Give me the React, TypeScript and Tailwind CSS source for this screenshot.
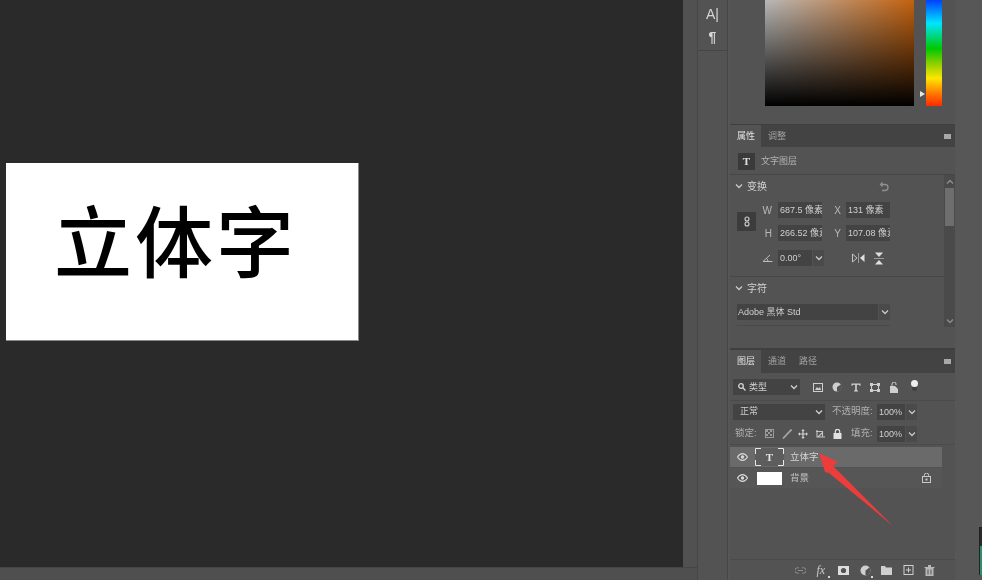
const cjk = "font-['Liberation_Sans','Noto_Sans_CJK_SC',sans-serif]";

const Chevron = ({ className = "" }: { className?: string }) => (
  <svg width="8" height="6" viewBox="0 0 8 6" className={className} fill="none" stroke="currentColor" strokeWidth="1.3">
    <path d="M1 1.5l3 3 3-3" />
  </svg>
);

const MenuIcon = () => (
  <div className="w-[7px] h-[5px] bg-[#a8a8a8]" />
);

const Eye = () => (
  <svg width="11" height="8" viewBox="0 0 11 8">
    <path d="M0.5 4C2 1.5 3.6 0.6 5.5 0.6S9 1.5 10.5 4C9 6.5 7.4 7.4 5.5 7.4S2 6.5 0.5 4z" fill="none" stroke="#d8d8d8" strokeWidth="1.1" />
    <circle cx="5.5" cy="4" r="1.7" fill="#d8d8d8" />
  </svg>
);

const Input = ({ w, children }: { w: string; children: React.ReactNode }) => (
  <div className={`${w} h-[16px] bg-[#434343] text-[9px] leading-[17px] pl-[2px] text-[#d0d0d0] overflow-hidden whitespace-nowrap`}>
    {children}
  </div>
);

const Drop = () => (
  <div className="w-[11px] h-[16px] bg-[#4a4a4a] flex items-center justify-center text-[#c8c8c8]">
    <Chevron />
  </div>
);

const Tab = ({ label, active }: { label: string; active?: boolean }) => (
  <div className={`h-full px-[7px] pt-[1px] w-[31px] flex items-center text-[9px] whitespace-nowrap ${active ? "bg-[#535353] text-[#e0e0e0]" : "text-[#a2a2a2]"}`}>
    {label}
  </div>
);

const FilterIcons = () => (
  <div className="flex items-center text-[#d0d0d0]">
    <svg width="10" height="9" viewBox="0 0 10 9" className="ml-[12px]"><rect x="0.5" y="0.5" width="9" height="8" fill="none" stroke="#cfcfcf" /><path d="M2 7l2-3 1.5 1.5L7 4l1 3z" fill="#cfcfcf" /></svg>
    <svg width="10" height="10" viewBox="0 0 10 10" className="ml-[9px]"><circle cx="5" cy="5" r="4.5" fill="#cfcfcf" /><path d="M5 5L9 2.5A4.5 4.5 0 0 1 5 9.5z" fill="#535353" /></svg>
    <svg width="10" height="9" viewBox="0 0 10 9" className="ml-[9px]"><path d="M0.5 0.5h9v2.2h-.9l-.4-1H5.8v5.6l1.2.3v.9H3v-.9l1.2-.3V1.7H1.8l-.4 1H.5z" fill="#d4d4d4" /></svg>
    <svg width="10" height="9" viewBox="0 0 10 9" className="ml-[9px]"><rect x="1.5" y="1.5" width="7" height="6" fill="none" stroke="#cfcfcf" /><path d="M0 0h3v3H0zM7 0h3v3H7zM0 6h3v3H0zM7 6h3v3H7z" fill="#cfcfcf" /></svg>
    <svg width="10" height="11" viewBox="0 0 10 11" className="ml-[9px]"><path d="M1 4h5l3 3v4H1z" fill="#cfcfcf" /><path d="M3 4V2a2 2 0 0 1 4 0v1" fill="none" stroke="#cfcfcf" /></svg>
    <div className="ml-[12px] flex flex-col items-center -mt-[4px]">
      <div className="w-[7px] h-[7px] rounded-full bg-[#ededed]" />
      <div className="w-[5px] h-[4px] rounded-b-full bg-[#3f3f3f]" />
    </div>
  </div>
);

const LockIcons = () => (
  <div className="flex items-center">
    <svg width="9" height="9" viewBox="0 0 9 9" className="ml-[8px]"><rect x="0.5" y="0.5" width="8" height="8" fill="none" stroke="#9a9a9a" /><path d="M1 1h2v2H1zM5 1h2v2H5zM3 3h2v2H3zM1 5h2v2H1zM5 5h2v2H5z" fill="#9a9a9a" /></svg>
    <svg width="10" height="10" viewBox="0 0 10 10" className="ml-[8px]"><path d="M1 9.500L9.500 .5" stroke="#a4a4a4" strokeWidth="1.800" fill="none" /></svg>
    <svg width="10" height="10" viewBox="0 0 10 10" className="ml-[6px]"><path d="M5 0l1.700 2H5.600v2.400H8V3.300l2 1.700-2 1.700V5.600H5.600V8h1.100L5 10 3.300 8h1.100V5.600H2v1.100L0 5l2-1.700v1.100h2.400V2H3.300z" fill="#d2d2d2" /></svg>
    <svg width="11" height="10" viewBox="0 0 11 10" className="ml-[7px]"><path d="M2 1v7h8M1 2.500h6.500V8M3 8l5-5" fill="none" stroke="#c4c4c4" strokeWidth="1.100" /></svg>
    <svg width="9" height="10" viewBox="0 0 9 10" className="ml-[7px]"><rect x="0.5" y="4" width="8" height="6" fill="#e2e2e2" /><path d="M2.300 4V2.500a2.200 2.200 0 0 1 4.400 0V4" fill="none" stroke="#e2e2e2" strokeWidth="1.200" /></svg>
  </div>
);

const FooterIcons = () => (
  <div className="h-[20px] flex items-center pl-[65px] gap-[10.5px]">
    <svg width="11" height="7" viewBox="0 0 11 7"><path d="M4 .8H2.500a2.700 2.700 0 0 0 0 5.400H4M7 .8h1.500a2.700 2.700 0 0 1 0 5.400H7M3 3.500h5" fill="none" stroke="#8e8e8e" /></svg>
    <span className="relative font-['Liberation_Serif',serif] italic text-[12px] leading-[12px] text-[#c8c8c8] w-[11px]">
      fx
      <div className="absolute right-[-2px] bottom-[-2px] w-[2px] h-[2px] bg-[#d8d8d8]" />
    </span>
    <svg width="11" height="9" viewBox="0 0 11 9"><rect width="11" height="9" fill="#dedede" /><circle cx="5.500" cy="4.500" r="2.600" fill="#535353" /></svg>
    <div className="relative">
      <svg width="11" height="11" viewBox="0 0 11 11" className="block"><circle cx="5.500" cy="5.500" r="5" fill="#cfcfcf" /><path d="M5.500 5.500L9.500 2.500A5 5 0 0 1 5.500 10.500z" fill="#535353" /></svg>
      <div className="absolute right-[-2px] bottom-[-2px] w-[2px] h-[2px] bg-[#d8d8d8]" />
    </div>
    <svg width="11" height="9" viewBox="0 0 11 9"><path d="M0 0h4l1 1.500h6V9H0z" fill="#cfcfcf" /></svg>
    <svg width="11" height="10" viewBox="-0.5 0 11 10"><rect x="0.500" y="0.500" width="9" height="9" fill="none" stroke="#cfcfcf" /><path d="M5 2.500v5M2.500 5h5" stroke="#cfcfcf" /></svg>
    <svg width="11" height="11" viewBox="-0.5 0 11 11"><path d="M0 2h10v1H9v8H1V3H0zM3.500 0h3v2h-3z" fill="#b8b8b8" /><path d="M3.500 4.500v5M6.500 4.500v5" stroke="#535353" /></svg>
  </div>
);

export default function App() {
  return (
    <div className={`relative w-[982px] h-[580px] overflow-hidden flex bg-[#565656] ${cjk}`}>
      {/* document area */}
      <div className="w-[697px] h-full flex flex-col">
        <div className="flex h-[567px]">
          <div className="w-[683px] h-full bg-[#2a2a2a] pl-[6px] pt-[163px]">
            <div className="w-[353px] h-[178px] bg-white flex items-center pl-[48px] pb-[27px] border-b border-r border-[#8a8a8a]">
              <span className="text-[78px] leading-none tracking-[3px] font-medium text-black whitespace-nowrap font-['Noto_Sans_CJK_SC',sans-serif] blur-[0.5px]">立体字</span>
            </div>
          </div>
          <div className="w-[14px] h-full bg-[#515151]" />
        </div>
        <div className="h-[13px] bg-[#4f4f4f] border-t border-[#454545]" />
      </div>

      {/* tool strip */}
      <div className="w-[31px] h-full bg-[#535353] border-x border-[#464646] shrink-0">
        <div className="h-[51px] border-b border-[#454545] flex flex-col items-center pt-[5px] text-[#d6d6d6] blur-[0.5px]">
          <span className="text-[14px] leading-[18px]">A|</span>
          <span className="text-[14px] leading-[18px] font-bold mt-[5px]">¶</span>
        </div>
      </div>

      {/* panels */}
      <div className="w-[225px] ml-[2px] h-full shrink-0 flex flex-col bg-[#3f3f3f] blur-[0.5px]">
        {/* colour picker */}
        <div className="h-[124px] bg-[#535353] flex pl-[35px] shrink-0">
          <div className="w-[149px] h-[106px] bg-[linear-gradient(to_bottom,transparent,#000),linear-gradient(to_right,#b8b8b8,#c4620f)]" />
          <div className="relative w-[16px] h-[106px] ml-[12px] bg-[linear-gradient(to_bottom,#0040ff_0%,#00e5ff_22%,#00c800_46%,#8cd000_60%,#ffe600_74%,#ff7a00_88%,#ff2a00_100%)]">
            <div className="absolute -left-[6px] top-[91px] w-0 h-0 border-y-[3px] border-y-transparent border-l-[5px] border-l-[#e8e8e8]" />
          </div>
        </div>

        {/* properties */}
        <div className="h-[22px] mt-[1px] flex items-center bg-[#434343] shrink-0">
          <Tab label="属性" active />
          <Tab label="调整" />
          <div className="ml-auto mr-[4px]"><MenuIcon /></div>
        </div>
        <div className="h-[201px] bg-[#535353] shrink-0 flex flex-col">
          <div className="h-[28px] flex items-center pl-[8px] pt-[1px] gap-[6px] border-b border-[#474747]">
            <div className="w-[17px] h-[17px] bg-[#3a3a3a] text-[#e0e0e0] text-[11px] font-bold flex items-center justify-center font-['Liberation_Serif',serif]">T</div>
            <span className="text-[9px] pt-[1px] text-[#b4b4b4]">文字图层</span>
          </div>
          <div className="flex flex-1">
            <div className="w-[214px] flex flex-col text-[#c8c8c8]">
              <div className="h-[22px] flex items-center pl-[5px] pr-[55px]">
                <Chevron />
                <span className="ml-[4px] text-[10px] text-[#d2d2d2]">变换</span>
                <svg width="11" height="11" viewBox="0 0 11 11" className="ml-auto" fill="none" stroke="#8f8f8f" strokeWidth="1.300">
                  <path d="M3 3.500h4a3 3 0 0 1 0 6H4M4.500 1.500l-2 2 2 2" />
                </svg>
              </div>
              <div className="flex pl-[7px]">
                <div className="w-[19px] h-[19px] mt-[15px] bg-[#3c3c3c] flex items-center justify-center">
                  <svg width="6" height="11" viewBox="0 0 6 11" fill="none" stroke="#cfcfcf" strokeWidth="1.100">
                    <circle cx="3" cy="3" r="2" /><circle cx="3" cy="8" r="2" />
                  </svg>
                </div>
                <div className="flex flex-col gap-[7px] pt-[5px]">
                  <div className="flex items-center h-[16px]">
                    <span className="w-[22px] text-right pr-[6px] text-[10px] text-[#b8b8b8]">W</span>
                    <Input w="w-[44px]">687.5 像素</Input>
                    <span className="w-[24px] text-right pr-[5px] text-[10px] text-[#b8b8b8]">X</span>
                    <Input w="w-[44px]">131 像素</Input>
                  </div>
                  <div className="flex items-center h-[16px]">
                    <span className="w-[22px] text-right pr-[6px] text-[10px] text-[#b8b8b8]">H</span>
                    <Input w="w-[44px]">266.52 像素</Input>
                    <span className="w-[24px] text-right pr-[5px] text-[10px] text-[#b8b8b8]">Y</span>
                    <Input w="w-[44px]">107.08 像素</Input>
                  </div>
                </div>
              </div>
              <div className="flex items-center h-[16px] mt-[9px] pl-[32px]">
                <svg width="11" height="8" viewBox="0 0 11 8" fill="none" stroke="#bdbdbd"><path d="M10.500 7.500H1L8 1M6 7.500a4 4 0 0 0-1.500-3" /></svg>
                <div className="ml-[5px]"><Input w="w-[34px]">0.00°</Input></div>
                <div className="ml-[1px]"><Drop /></div>
                <svg width="13" height="10" viewBox="0 0 13 10" className="ml-[28px]"><path d="M0.500 1l4.500 4-4.500 4z" fill="none" stroke="#c4c4c4" /><path d="M6.500 0v10" stroke="#9a9a9a" /><path d="M12.500 1L8 5l4.500 4z" fill="#e0e0e0" /></svg>
                <svg width="10" height="13" viewBox="0 0 10 13" className="ml-[9px]"><path d="M1 .5l4 4.500 4-4.500z" fill="#e0e0e0" /><path d="M0 6.500h10" stroke="#9a9a9a" /><path d="M1 12.500L5 8l4 4.500z" fill="#e0e0e0" /></svg>
              </div>
              <div className="border-b border-[#474747] mt-[10px]" />
              <div className="h-[22px] flex items-center pl-[5px]">
                <Chevron />
                <span className="ml-[4px] text-[10px] text-[#d2d2d2]">字符</span>
              </div>
              <div className="flex mt-[5px] pl-[7px]">
                <div className="w-[141px] h-[16px] bg-[#434343] text-[9px] leading-[17px] pl-[1px] text-[#d0d0d0]">Adobe 黑体 Std</div>
                <div className="ml-[1px]"><Drop /></div>
              </div>
              <div className="mt-[5px] ml-[7px] w-[153px] border-b border-[#4a4a4a]" />
            </div>
            <div className="w-[11px] h-[152px] bg-[#4a4a4a] flex flex-col items-center text-[#8e8e8e]">
              <Chevron className="rotate-180 mt-[4px]" />
              <div className="w-[9px] h-[38px] mt-[3px] bg-[#6e6e6e]" />
              <Chevron className="mt-auto mb-[3px]" />
            </div>
          </div>
        </div>

        {/* layers */}
        <div className="h-[23px] mt-[2px] flex items-center bg-[#434343] shrink-0">
          <Tab label="图层" active />
          <Tab label="通道" />
          <Tab label="路径" />
          <div className="ml-auto mr-[4px]"><MenuIcon /></div>
        </div>
        <div className="flex-1 bg-[#535353] flex flex-col">
          <div className="h-[28px] flex items-center pl-[3px] pt-[1px] border-b border-[#4b4b4b]">
            <div className="w-[67px] h-[16px] bg-[#434343] flex items-center pl-[5px] text-[#d0d0d0]">
              <svg width="8" height="8" viewBox="0 0 8 8" fill="none" stroke="#d4d4d4" strokeWidth="1.300"><circle cx="3" cy="3" r="2.300" /><path d="M4.800 4.800L7.500 7.500" /></svg>
              <span className="text-[9px] pt-[1px] ml-[3px]">类型</span>
              <Chevron className="ml-auto mr-[2px]" />
            </div>
            <div className="ml-[1px]"><FilterIcons /></div>
          </div>
          <div className="h-[21px] flex items-center pl-[3px] text-[#b0b0b0]">
            <div className="w-[92px] h-[16px] bg-[#434343] flex items-center pl-[7px] text-[#d0d0d0]">
              <span className="text-[9px]">正常</span>
              <Chevron className="ml-auto mr-[2px]" />
            </div>
            <span className="text-[9.500px] ml-[7px] w-[45px] whitespace-nowrap">不透明度:</span>
            <Input w="w-[28px]">100%</Input>
            <div className="ml-[1px]"><Drop /></div>
          </div>
          <div className="h-[23px] flex items-center pl-[5px] pt-[1px] border-b border-[#4b4b4b] text-[#b0b0b0]">
            <span className="text-[9.500px] w-[22px] whitespace-nowrap">锁定:</span>
            <LockIcons />
            <span className="text-[9.500px] ml-[9px] w-[26px] whitespace-nowrap">填充:</span>
            <Input w="w-[28px]">100%</Input>
            <div className="ml-[1px]"><Drop /></div>
          </div>
          <div className="flex-1 flex flex-col">
            <div className="w-[212px] h-[20px] bg-[#6a6a6a] flex items-center pl-[7px] mt-[2px]">
              <Eye />
              <div className="w-[29px] h-[18px] ml-[7px] relative bg-[#5d5d5d] flex items-center justify-center text-[11px] font-bold text-[#e4e4e4] font-['Liberation_Serif',serif]">
                <svg width="29" height="18" viewBox="0 0 29 18" className="absolute inset-0" fill="none" stroke="#e8e8e8">
                  <path d="M6 .5H.5V6M23 .5h5.500V6M6 17.500H.5V12M23 17.500h5.500V12" />
                </svg>
                T
              </div>
              <span className="text-[9.500px] ml-[6px] text-[#d4d4d4]">立体字</span>
            </div>
            <div className="w-[212px] h-[20px] mt-[1px] bg-[#565656] flex items-center pl-[7px]">
              <Eye />
              <div className="w-[25px] h-[13px] ml-[9px] bg-white" />
              <span className="text-[9.500px] ml-[8px] text-[#c4c4c4]">背景</span>
              <svg width="9" height="10" viewBox="0 0 9 10" className="ml-auto mr-[11px]"><rect x="0.500" y="3.500" width="8" height="6" fill="none" stroke="#c8c8c8" /><path d="M2.300 3.500V2.300a2.200 2.200 0 0 1 4.400 0v1.200" fill="none" stroke="#c8c8c8" /><rect x="3.500" y="5.500" width="2" height="2" fill="#c8c8c8" /></svg>
            </div>
            <div className="mt-auto border-t border-[#4b4b4b]"><FooterIcons /></div>
          </div>
        </div>
      </div>

      {/* right edge */}
      <div className="flex-1 bg-[#575757] pt-[527px] pl-[24px]">
        <div className="w-[4px] h-[48px] border-l border-t border-[#222] bg-[linear-gradient(to_bottom,#2a2a2a_38%,#2f8f6c_38%)]" />
      </div>

      {/* red annotation arrow */}
      <svg width="982" height="580" viewBox="0 0 982 580" className="absolute inset-0 pointer-events-none">
        <path d="M819 453L838 462L833 466L893 526L829 473L825 472z" fill="#ec3d3d" />
      </svg>
    </div>
  );
}
